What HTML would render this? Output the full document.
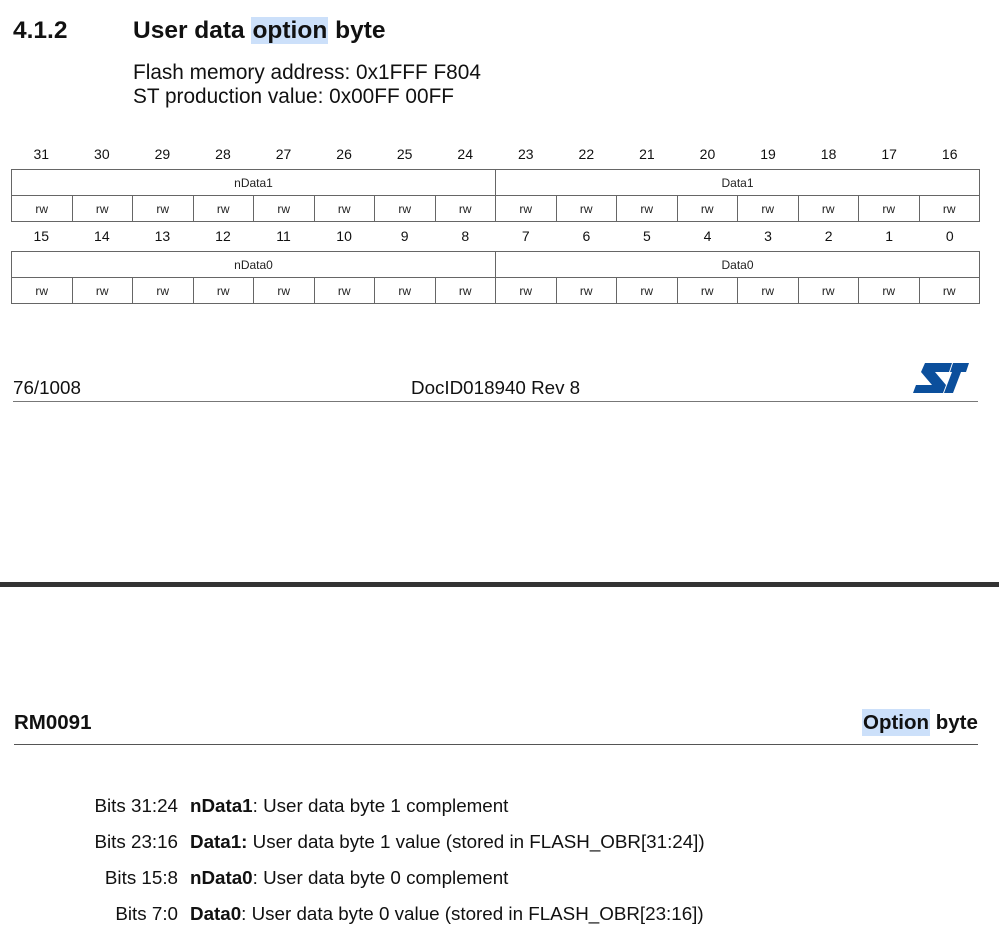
<!DOCTYPE html>
<html><head><meta charset="utf-8"><style>
body{margin:0;width:999px;height:940px;background:#fff;position:relative;overflow:hidden;font-family:"Liberation Sans",Arial,sans-serif;color:#111}
.a{position:absolute;white-space:nowrap}
.hl{background:#cce0fa}
table{position:absolute;left:11px;width:969px;border-collapse:collapse;table-layout:fixed;font-size:12px}
td{border:1px solid #666;text-align:center;height:25px;padding:0;color:#222}
.b{position:absolute;font-size:18.8px;line-height:20px}
</style></head><body>
<div class="a" style="left:13px;top:15px;font-size:24.5px;font-weight:bold;line-height:32px">4.1.2</div>
<div class="a" style="left:133px;top:15px;font-size:24.5px;font-weight:bold;line-height:32px">User data <span class="hl" style="padding:0 1px">option</span> byte</div>
<div class="a" style="left:133px;top:61px;font-size:20.8px;line-height:24px">Flash memory address: 0x1FFF F804<br>ST production value: 0x00FF 00FF</div>

<div class="a" style="left:11px;top:146px;width:969px;display:flex;font-size:14px">
<span style="flex:1;text-align:center">31</span><span style="flex:1;text-align:center">30</span><span style="flex:1;text-align:center">29</span><span style="flex:1;text-align:center">28</span><span style="flex:1;text-align:center">27</span><span style="flex:1;text-align:center">26</span><span style="flex:1;text-align:center">25</span><span style="flex:1;text-align:center">24</span><span style="flex:1;text-align:center">23</span><span style="flex:1;text-align:center">22</span><span style="flex:1;text-align:center">21</span><span style="flex:1;text-align:center">20</span><span style="flex:1;text-align:center">19</span><span style="flex:1;text-align:center">18</span><span style="flex:1;text-align:center">17</span><span style="flex:1;text-align:center">16</span></div>
<table style="top:169px"><tr><td colspan="8">nData1</td><td colspan="8">Data1</td></tr>
<tr><td>rw</td><td>rw</td><td>rw</td><td>rw</td><td>rw</td><td>rw</td><td>rw</td><td>rw</td><td>rw</td><td>rw</td><td>rw</td><td>rw</td><td>rw</td><td>rw</td><td>rw</td><td>rw</td></tr></table>
<div class="a" style="left:11px;top:228px;width:969px;display:flex;font-size:14px">
<span style="flex:1;text-align:center">15</span><span style="flex:1;text-align:center">14</span><span style="flex:1;text-align:center">13</span><span style="flex:1;text-align:center">12</span><span style="flex:1;text-align:center">11</span><span style="flex:1;text-align:center">10</span><span style="flex:1;text-align:center">9</span><span style="flex:1;text-align:center">8</span><span style="flex:1;text-align:center">7</span><span style="flex:1;text-align:center">6</span><span style="flex:1;text-align:center">5</span><span style="flex:1;text-align:center">4</span><span style="flex:1;text-align:center">3</span><span style="flex:1;text-align:center">2</span><span style="flex:1;text-align:center">1</span><span style="flex:1;text-align:center">0</span></div>
<table style="top:251px"><tr><td colspan="8">nData0</td><td colspan="8">Data0</td></tr>
<tr><td>rw</td><td>rw</td><td>rw</td><td>rw</td><td>rw</td><td>rw</td><td>rw</td><td>rw</td><td>rw</td><td>rw</td><td>rw</td><td>rw</td><td>rw</td><td>rw</td><td>rw</td><td>rw</td></tr></table>

<div class="a" style="left:13px;top:377px;font-size:18.8px;line-height:22px">76/1008</div>
<div class="a" style="left:411px;top:377px;font-size:18.8px;line-height:22px">DocID018940 Rev 8</div>
<svg class="a" style="left:912px;top:363px" width="58" height="31" viewBox="0 0 58 31">
<path fill="#0b4f9c" d="M13 0H40L37 9H23L34 22L31 30H1L4 22H20L9 9Z"/>
<path fill="#0b4f9c" d="M41 0H57L54 9H49L41 30H32L40 9H38Z"/>
</svg>
<div class="a" style="left:13px;top:401px;width:965px;height:1px;background:#777"></div>

<div class="a" style="left:0;top:582px;width:999px;height:5px;background:#333"></div>

<div class="a" style="left:14px;top:711px;font-size:20.5px;font-weight:bold;line-height:24px">RM0091</div>
<div class="a" style="left:862px;top:711px;font-size:20.5px;font-weight:bold;line-height:24px"><span class="hl" style="padding:2px 1px">Option</span> byte</div>
<div class="a" style="left:14px;top:744px;width:964px;height:1px;background:#555"></div>

<div class="b" style="right:821px;top:796px">Bits 31:24</div>
<div class="b" style="left:190px;top:796px"><b>nData1</b>: User data byte 1 complement</div>
<div class="b" style="right:821px;top:832px">Bits 23:16</div>
<div class="b" style="left:190px;top:832px"><b>Data1:</b> User data byte 1 value (stored in FLASH_OBR[31:24])</div>
<div class="b" style="right:821px;top:868px">Bits 15:8</div>
<div class="b" style="left:190px;top:868px"><b>nData0</b>: User data byte 0 complement</div>
<div class="b" style="right:821px;top:904px">Bits 7:0</div>
<div class="b" style="left:190px;top:904px"><b>Data0</b>: User data byte 0 value (stored in FLASH_OBR[23:16])</div>
</body></html>
